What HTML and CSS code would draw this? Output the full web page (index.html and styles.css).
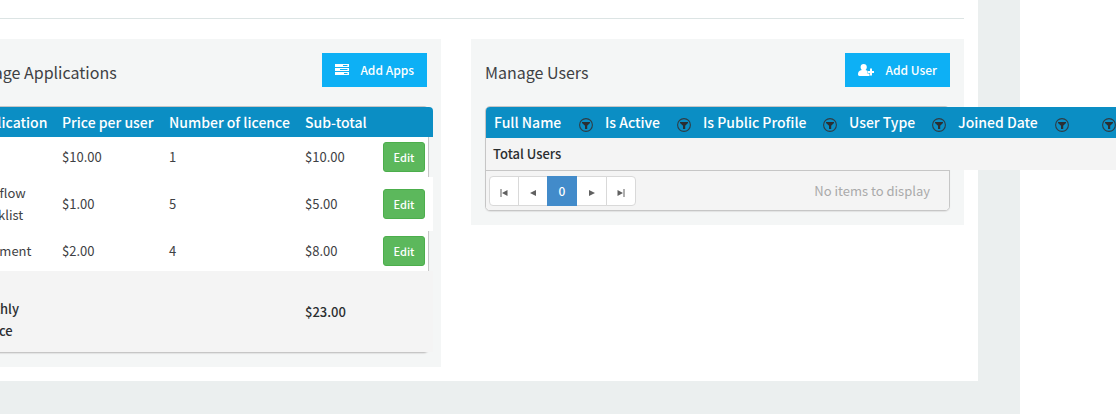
FILE: index.html
```
<!DOCTYPE html>
<html lang="en">
<head>
<meta charset="utf-8">
<title>Manage account</title>
<link rel="stylesheet" href="styles.css">
</head>
<body>
<svg class="defs" aria-hidden="true">
  <symbol id="filter" viewBox="0 0 14 14">
    <circle cx="7" cy="7" r="6.4" fill="none" stroke="#2f3c44" stroke-width="1.1"/>
    <path d="M3 4h8v1L8.2 7.700V11H6V7.700L3 5z" fill="#2b2f33"/>
  </symbol>
</svg>
<div class="page">
  <main class="card">
    <hr class="rule">
    <div class="panels">
      <section class="panel">
        <header class="panel-head">
          <h2 class="title">Manage Applications</h2>
          <button class="add" type="button">
            <svg width="14" height="12" viewBox="0 0 14 12" aria-hidden="true"><path fill="#fff" d="M0 0h14v3H0zM0 4h14v3H0zM0 8h14v3H0z"/><path stroke="#0db0f5" d="M8 1.500h4.500M5 5.500h7.500M9 9.500h3.500"/></svg>
            <span>Add Apps</span>
          </button>
        </header>
        <div class="grid apps-grid">
          <table class="apps">
            <colgroup><col class="c-app"><col class="c-price"><col class="c-count"><col class="c-sub"><col></colgroup>
            <thead><tr><th>Application</th><th>Price per user</th><th>Number of licence</th><th>Sub-total</th><th></th></tr></thead>
            <tbody>
              <tr><td>Task</td><td>$10.00</td><td>1</td><td>$10.00</td><td><button class="edit" type="button">Edit</button></td></tr>
              <tr class="alt"><td>Workflow Checklist</td><td>$1.00</td><td>5</td><td>$5.00</td><td><button class="edit" type="button">Edit</button></td></tr>
              <tr><td>Document</td><td>$2.00</td><td>4</td><td>$8.00</td><td><button class="edit" type="button">Edit</button></td></tr>
            </tbody>
            <tfoot><tr><td>Total Monthly Invoice</td><td></td><td></td><td>$23.00</td><td></td></tr></tfoot>
          </table>
        </div>
      </section>
      <section class="panel">
        <header class="panel-head">
          <h2 class="title">Manage Users</h2>
          <button class="add" type="button">
            <svg width="16" height="12" viewBox="0 0 16 12" aria-hidden="true"><path fill="#fff" d="M5.700 0C7.600 0 8.800 1.300 8.800 3c0 1.400-.5 2.400-1.300 3 1 .2 1.800.5 2.300 1H9.500v2.500h2V12H1.500C.5 12 0 11.300 0 10.300 0 8 1 6.300 3.900 6 3.100 5.400 2.600 4.400 2.600 3 2.600 1.300 3.800 0 5.700 0z"/><path fill="#fff" d="M12 4.500h2V7h2v2h-2v2.500h-2V9H9.800V7H12z"/></svg>
            <span>Add User</span>
          </button>
        </header>
        <div class="grid">
          <table class="users">
            <colgroup><col class="u-name"><col class="u-active"><col class="u-public"><col class="u-type"><col class="u-joined"><col class="u-last"></colgroup>
            <thead><tr>
              <th><div class="head-cell">Full Name<button class="filter" type="button" aria-label="Filter full name"><svg><use href="#filter"/></svg></button></div></th>
              <th><div class="head-cell">Is Active<button class="filter" type="button" aria-label="Filter is active"><svg><use href="#filter"/></svg></button></div></th>
              <th><div class="head-cell">Is Public Profile<button class="filter" type="button" aria-label="Filter is public profile"><svg><use href="#filter"/></svg></button></div></th>
              <th><div class="head-cell">User Type<button class="filter" type="button" aria-label="Filter user type"><svg><use href="#filter"/></svg></button></div></th>
              <th><div class="head-cell">Joined Date<button class="filter" type="button" aria-label="Filter joined date"><svg><use href="#filter"/></svg></button></div></th>
              <th><div class="head-cell"><button class="filter" type="button" aria-label="Filter"><svg><use href="#filter"/></svg></button></div></th>
            </tr></thead>
            <tfoot><tr><td colspan="6">Total Users</td></tr></tfoot>
          </table>
          <div class="pager">
            <nav class="pages" aria-label="Pages">
              <button type="button" aria-label="First page"><svg viewBox="0 0 8 8"><path d="M.5 0h1v8h-1zM7.500 1v6L2 4z"/></svg></button>
              <button type="button" aria-label="Previous page"><svg viewBox="0 0 8 8"><path d="M7 1v6L1 4z"/></svg></button>
              <button type="button" class="current">0</button>
              <button type="button" aria-label="Next page"><svg viewBox="0 0 8 8"><path d="M1 1v6L7 4z"/></svg></button>
              <button type="button" aria-label="Last page"><svg viewBox="0 0 8 8"><path d="M6.500 0h1v8h-1zM.5 1v6L6 4z"/></svg></button>
            </nav>
            <span class="empty">No items to display</span>
          </div>
        </div>
      </section>
    </div>
  </main>
</div>
</body>
</html>
```
FILE: styles.css
```
* { box-sizing: border-box; }
body {
  margin: 0;
  overflow: hidden;
  background: #fff;
  color: #3e4144;
  font: 13px/22px "Noto Sans CJK SC", "Open Sans", sans-serif;
}
button { font: inherit; cursor: pointer; }
.defs { display: none; }
.page {
  min-height: 100vh;
  margin-right: 96px;
  padding-right: 42px;
  background: #ebefef;
}
.card {
  margin-left: -66px;
  padding: 18px 14px 14px;
  background: #fff;
}
.rule {
  height: 1px;
  margin: 0 0 20px;
  border: 0;
  background: #dce4e4;
}
.panels {
  display: grid;
  grid-template-columns: minmax(0, 1fr) minmax(0, 1fr);
  gap: 30px;
  align-items: start;
}
.panel { padding: 14px; background: #f4f6f6; }
.panel-head {
  display: flex;
  justify-content: space-between;
  align-items: center;
  margin-bottom: 19px;
}
.title {
  margin: 0;
  padding-top: 4px;
  font-size: 16px;
  font-weight: 400;
  color: #3e4144;
}
.add {
  display: flex;
  justify-content: space-between;
  align-items: center;
  min-width: 105px;
  height: 34px;
  padding: 0 13px;
  border: 0;
  background: #0db0f5;
  color: #fff;
  font-size: 12px;
  font-weight: 500;
}
.grid {
  border: 1px solid #c6c6c6;
  border-radius: 5px;
  background: #fff;
  box-shadow: 0 1px 1px #e2e3e3;
}
.apps-grid { margin-right: -2px; }
table { border-collapse: separate; border-spacing: 0; table-layout: fixed; }
th {
  height: 30px;
  padding: 0 8px;
  background: #0b8ec4;
  color: #fff;
  font-size: 14px;
  font-weight: 500;
  text-align: left;
  white-space: nowrap;
}
td { padding: 5px 8px; }
.apps { width: calc(100% + 5px); }
.c-app { width: 91px; }
.c-price { width: 107px; }
.c-count { width: 136px; }
.c-sub { width: 78px; }
.apps th:last-child { border-top-right-radius: 4px; }
.apps td:first-child { padding-left: 5px; }
.alt td { background: #fff; }
tfoot td { background: #f4f4f4; color: #2b2e30; font-weight: 500; }
.apps tfoot td { height: 81px; }
.apps tfoot td:first-child { padding-bottom: 10px; }
.edit {
  display: block;
  width: 42px;
  height: 30px;
  padding: 0;
  border: 1px solid #4cae4c;
  border-radius: 3px;
  background: #5cb85c;
  color: #fff;
  font-size: 11px;
  font-weight: 500;
}
.users { width: 634px; }
.users th { height: 31px; padding: 0 4px 2px 8px; }
.users th:first-child { border-top-left-radius: 4px; }
.users tfoot td { height: 32px; padding: 5px 7px; }
.u-name { width: 111px; }
.u-active { width: 98px; }
.u-public { width: 146px; }
.u-type { width: 109px; }
.u-joined { width: 123px; }
.u-last { width: 47px; }
.head-cell { display: flex; align-items: center; }
.filter {
  margin: 6px 0 0 auto;
  padding: 0;
  border: 0;
  background: none;
  line-height: 0;
}
.filter svg { display: block; width: 14px; height: 14px; }
.pager {
  display: flex;
  justify-content: space-between;
  align-items: center;
  padding: 5px 19px 4px 3px;
  border-top: 1px solid #c6c6c6;
  border-radius: 0 0 4px 4px;
  background: #f4f4f4;
}
.pages { display: flex; }
.pages button {
  display: grid;
  place-items: center;
  width: 30px;
  height: 30px;
  padding: 4px 0 0;
  border: 1px solid #d9d9d9;
  background: #fff;
  color: #fff;
  font-size: 12px;
}
.pages button + button { margin-left: -1px; }
.pages .current + button { margin-left: 0; border-left: 0; }
.pages button:first-child { border-radius: 4px 0 0 4px; }
.pages button:last-child { border-radius: 0 4px 4px 0; }
.pages .current {
  padding: 0;
  border-color: #428bca;
  background: #428bca;
  font-weight: 500;
  z-index: 1;
}
.pages svg { width: 8px; height: 8px; fill: #606060; }
.empty { color: #aaa; }
```
